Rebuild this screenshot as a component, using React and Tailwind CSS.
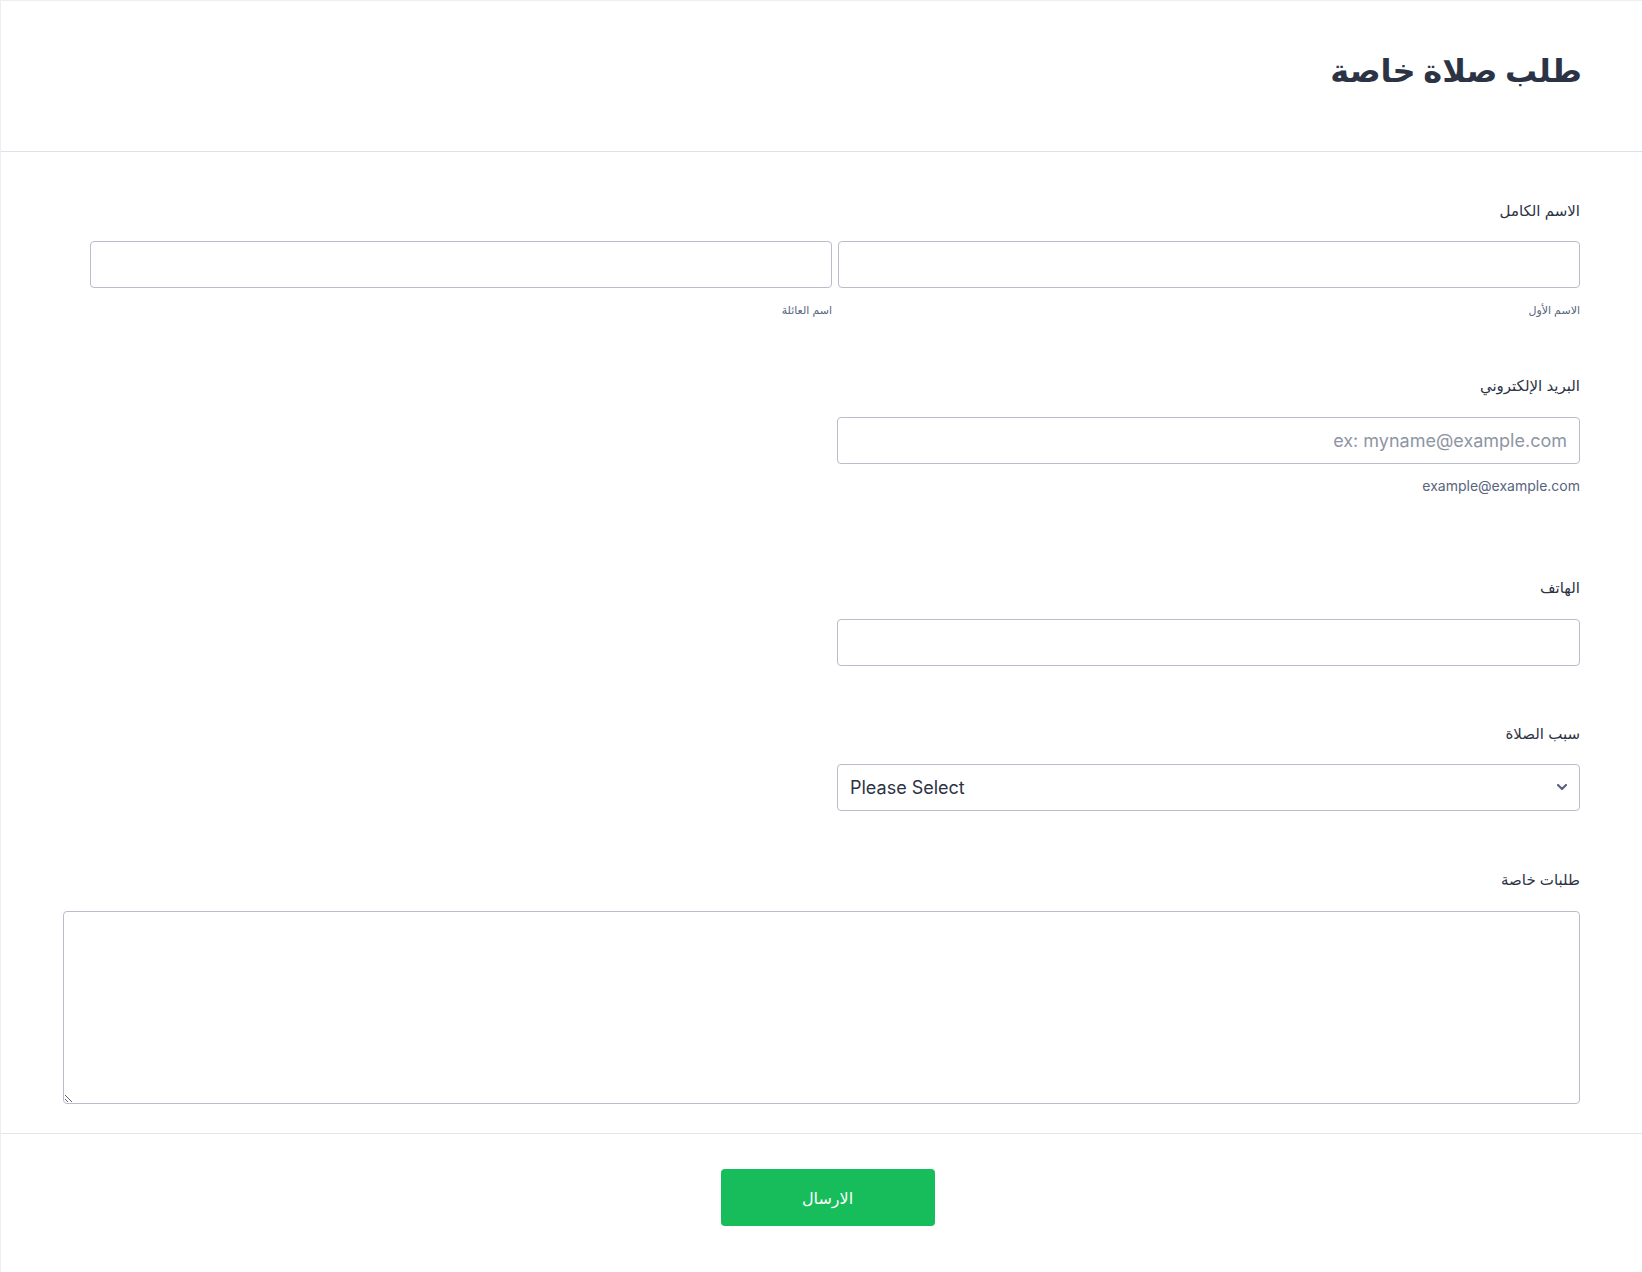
import React from 'react';

const inputCls = 'block w-full h-[47px] rounded-[4px] border border-[#b8bdc9] bg-white px-3 text-[18px] text-[#2c3345] outline-none placeholder:text-[#8f96a3]';

function Label({ children }) {
  return <div className="text-[15px] leading-[20px] text-[#2c3345]">{children}</div>;
}

export default function App() {
  return (
    <div dir="rtl" className="min-h-[1272px] w-[1642px] bg-white border-l border-t border-[#eceef3] font-['Inter','DejaVu_Sans',sans-serif]">
      {/* header */}
      <div className="h-[151px] border-b border-[#dfe1ea] px-[60px] pt-[50px]">
        <h1 className="text-[32px] leading-[40px] font-bold text-[#2c3345]">طلب صلاة خاصة</h1>
      </div>

      <div className="px-[62px] pt-[49px]">
        {/* full name */}
        <Label>الاسم الكامل</Label>
        <div className="mt-[20px] flex gap-[6px]">
          <div className="w-[742px]">
            <input className={inputCls} />
            <div className="mt-[14px] text-[11px] leading-[16px] text-[#57647e]">الاسم الأول</div>
          </div>
          <div className="w-[742px]">
            <input className={inputCls} />
            <div className="mt-[14px] text-[11px] leading-[16px] text-[#57647e]">اسم العائلة</div>
          </div>
        </div>

        {/* email */}
        <div className="mt-[58px]">
          <Label>البريد الإلكتروني</Label>
          <div className="mt-[21px] w-[743px]">
            <input className={inputCls} placeholder="ex: myname@example.com" />
            <div className="mt-[14px] text-[14px] leading-[16px] text-[#57647e]">example@example.com</div>
          </div>
        </div>

        {/* phone */}
        <div className="mt-[84px]">
          <Label>الهاتف</Label>
          <div className="mt-[21px] w-[743px]">
            <input className={inputCls} />
          </div>
        </div>

        {/* reason */}
        <div className="mt-[58px]">
          <Label>سبب الصلاة</Label>
          <div dir="ltr" className="relative mt-[20px] w-[743px] mr-0 ml-auto">
            <select className={`${inputCls} appearance-none pr-10`} defaultValue="">
              <option value="">Please Select</option>
            </select>
            <svg className="pointer-events-none absolute right-[12px] top-[18px] w-[12px] h-[10px]" viewBox="0 0 12 10" fill="none">
              <path d="M2 3l4 4 4-4" stroke="#57647e" strokeWidth="2.2" strokeLinecap="round" strokeLinejoin="round" />
            </svg>
          </div>
        </div>

        {/* requests */}
        <div className="mt-[59px]">
          <Label>طلبات خاصة</Label>
          <textarea className="mt-[21px] block w-full h-[193px] rounded-[4px] border border-[#b8bdc9] bg-white p-3 text-[16px] outline-none" />
        </div>
      </div>

      {/* footer */}
      <div className="mt-[29px] border-t border-[#e3e5ea] pt-[35px] pb-[48px] flex justify-center pl-[12px]">
        <button className="w-[214px] h-[57px] rounded-[4px] bg-[#18bd5b] text-white text-[16px]">الارسال</button>
      </div>
    </div>
  );
}
